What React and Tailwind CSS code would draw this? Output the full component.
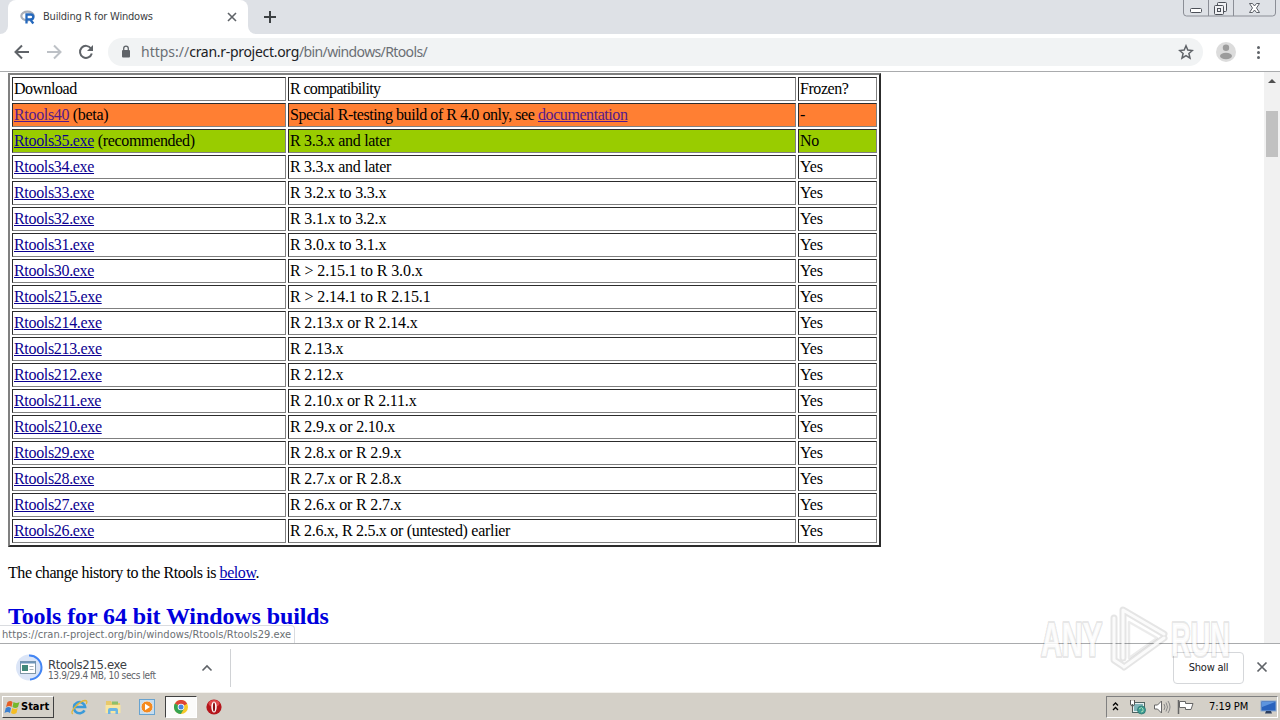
import React from "react";

const rows = [
  { name: "Rtools40", note: " (beta)", compat: "Special R-testing build of R 4.0 only, see ", doc: true, frozen: "-", color: "bg-[#ff7f33]", visited: true, spacing: "tracking-[-0.43px]" },
  { name: "Rtools35.exe", note: " (recommended)", compat: "R 3.3.x and later", frozen: "No", color: "bg-[#99cc00]", spacing: "tracking-[-0.3px]" },
  { name: "Rtools34.exe", compat: "R 3.3.x and later", frozen: "Yes", spacing: "tracking-[-0.3px]" },
  { name: "Rtools33.exe", compat: "R 3.2.x to 3.3.x", frozen: "Yes", spacing: "tracking-[-0.18px]" },
  { name: "Rtools32.exe", compat: "R 3.1.x to 3.2.x", frozen: "Yes", spacing: "tracking-[-0.18px]" },
  { name: "Rtools31.exe", compat: "R 3.0.x to 3.1.x", frozen: "Yes", spacing: "tracking-[-0.18px]" },
  { name: "Rtools30.exe", compat: "R > 2.15.1 to R 3.0.x", frozen: "Yes", spacing: "tracking-[-0.1px]" },
  { name: "Rtools215.exe", compat: "R > 2.14.1 to R 2.15.1", frozen: "Yes", spacing: "tracking-[-0.1px]" },
  { name: "Rtools214.exe", compat: "R 2.13.x or R 2.14.x", frozen: "Yes", spacing: "tracking-[-0.15px]" },
  { name: "Rtools213.exe", compat: "R 2.13.x", frozen: "Yes", spacing: "tracking-[-0.15px]" },
  { name: "Rtools212.exe", compat: "R 2.12.x", frozen: "Yes", spacing: "tracking-[-0.15px]" },
  { name: "Rtools211.exe", compat: "R 2.10.x or R 2.11.x", frozen: "Yes", spacing: "tracking-[-0.18px]" },
  { name: "Rtools210.exe", compat: "R 2.9.x or 2.10.x", frozen: "Yes", spacing: "tracking-[-0.17px]" },
  { name: "Rtools29.exe", compat: "R 2.8.x or R 2.9.x", frozen: "Yes", spacing: "tracking-[-0.18px]" },
  { name: "Rtools28.exe", compat: "R 2.7.x or R 2.8.x", frozen: "Yes", spacing: "tracking-[-0.18px]" },
  { name: "Rtools27.exe", compat: "R 2.6.x or R 2.7.x", frozen: "Yes", spacing: "tracking-[-0.18px]" },
  { name: "Rtools26.exe", compat: "R 2.6.x, R 2.5.x or (untested) earlier", frozen: "Yes", spacing: "tracking-[-0.3px]" },
];

const TabStrip = () => (
  <div className="flex h-[34px] shrink-0 bg-[#dee1e6]">
    <div className="h-full w-2 bg-white">
      <div className="h-full w-2 rounded-br-lg bg-[#dee1e6]" />
    </div>
    <div className="flex h-full w-60 items-center rounded-t-lg bg-white pl-3 pr-2.5">
      <svg width="16" height="16" viewBox="0 0 16 16" className="shrink-0">
        <ellipse cx="7.5" cy="7" rx="6.2" ry="4.3" fill="none" stroke="#a9afb9" strokeWidth="2.2" />
        <path d="M6.5 14.500V5.500h4.200q2.600 0 2.600 2.400t-2.600 2.400H7.500M10.300 10.500l3 4" fill="none" stroke="#2468bd" strokeWidth="2.300" />
      </svg>
      <span className="ml-[7px] flex-1 whitespace-nowrap font-['DejaVu_Sans_Condensed',sans-serif] text-[11px] tracking-[-0.2px] text-[#3c4043]">Building R for Windows</span>
      <svg width="12" height="12" viewBox="0 0 12 12">
        <path d="M2 2l8 8M10 2l-8 8" stroke="#5f6368" strokeWidth="1.6" />
      </svg>
    </div>
    <div className="h-full w-2 bg-white">
      <div className="h-full w-2 rounded-bl-lg bg-[#dee1e6]" />
    </div>
    <svg width="28" height="34" viewBox="0 0 28 34">
      <path d="M14 11v12M8 17h12" stroke="#3c4043" strokeWidth="2" />
    </svg>
    <svg width="100" height="18" viewBox="0 0 100 18" className="ml-auto" fill="none">
      <path d="M3.500 0v13q0 3 3 3h86q3 0 3-3V0M28.500 0v16M53.500 0v16" stroke="#8b8e96" />
      <rect x="10.500" y="8.500" width="11" height="4" rx="1" fill="#fff" stroke="#4c5058" />
      <rect x="37.500" y="2.500" width="9" height="9" rx="1" fill="#f0f1f4" stroke="#4c5058" />
      <rect x="34.500" y="5.500" width="9" height="9" rx="1" fill="#f0f1f4" stroke="#4c5058" />
      <rect x="37.500" y="8.500" width="3" height="3" stroke="#4c5058" />
      <path d="M69.500 3.500h3l2 2.500 2-2.500h3l-3 4.500 3 4.500h-3l-2-2.500-2 2.500h-3l3-4.500z" fill="#fff" stroke="#4c5058" strokeWidth=".9" />
    </svg>
  </div>
);

const Toolbar = () => (
  <div className="flex h-[38px] shrink-0 items-center border-b border-[#a9abad] bg-white pb-px">
    <svg width="108" height="36" viewBox="0 0 108 36" fill="none" strokeWidth="2">
      <path d="M29 18H16M22 11.500L15.500 18l6.500 6.500" stroke="#5f6368" />
      <path d="M47 18h13M54 11.500l6.500 6.500-6.500 6.500" stroke="#bdc1c6" />
      <path d="M91 14.500a6 6 0 1 0 .8 5" stroke="#5f6368" />
      <path d="M93 11v6h-6z" fill="#5f6368" />
    </svg>
    <div className="flex h-7 w-[1095px] items-center rounded-full bg-[#f1f3f4] pl-3 pr-[9px]">
      <svg width="12" height="14" viewBox="0 0 12 14">
        <rect x="2" y="5" width="8" height="7.500" rx="1" fill="#5f6368" />
        <path d="M3.700 5V3.500a2.300 2.300 0 0 1 4.600 0V5" fill="none" stroke="#5f6368" strokeWidth="1.300" />
      </svg>
      <span className="ml-[9px] flex-1 whitespace-nowrap pb-px font-['Noto_Sans',sans-serif] text-[14px] tracking-[-0.62px] text-[#6b6f74]">
        <span className="tracking-normal">https://</span>
        <span className="tracking-[-0.3px] text-[#202124]">cran.r-project.org</span>/bin/windows/Rtools/
      </span>
      <svg width="16" height="16" viewBox="0 0 16 16">
        <path d="M8 1.800l1.800 4.300 4.600.4-3.500 3 1.100 4.600-4-2.500-4 2.500 1.100-4.600-3.500-3 4.600-.4z" fill="none" stroke="#5f6368" strokeWidth="1.500" />
      </svg>
    </div>
    <svg width="77" height="36" viewBox="0 0 77 36" fill="#5f6368">
      <circle cx="23" cy="18" r="10" fill="#dcdcdc" />
      <circle cx="23" cy="13.800" r="3.200" fill="#9c9c9c" />
      <ellipse cx="23" cy="22" rx="6" ry="3.200" fill="#9c9c9c" />
      <circle cx="55.500" cy="13.500" r="1.500" />
      <circle cx="55.500" cy="18.500" r="1.500" />
      <circle cx="55.500" cy="23.500" r="1.500" />
    </svg>
  </div>
);

const cell = "h-6 border border-r-[#808080] border-b-[#808080] border-t-[#2c2c2c] border-l-[#2c2c2c] pl-px leading-[22px] whitespace-nowrap";

const RtoolsTable = () => (
  <div className="grid w-[873px] grid-cols-[274px_508px_79px] gap-0.5 border-2 border-t-[#808080] border-l-[#808080] border-r-[#2c2c2c] border-b-[#2c2c2c] p-0.5">
    <div className={`${cell} tracking-[-0.5px]`}>Download</div>
    <div className={`${cell} tracking-[-0.64px]`}>R compatibility</div>
    <div className={`${cell} tracking-[-0.43px]`}>Frozen?</div>
    {rows.map((row) => (
      <React.Fragment key={row.name}>
        <div className={`${cell} tracking-[-0.33px] ${row.color || ""}`}>
          <a className={`underline ${row.visited ? "text-[#551a8b]" : "text-[#0b0090]"}`}>{row.name}</a>
          {row.note}
        </div>
        <div className={`${cell} ${row.spacing} ${row.color || ""}`}>
          {row.compat}
          {row.doc && <a className="text-[#551a8b] underline">documentation</a>}
        </div>
        <div className={`${cell} tracking-[-0.2px] ${row.color || ""}`}>{row.frozen}</div>
      </React.Fragment>
    ))}
  </div>
);

const Page = () => (
  <div className="relative flex h-[571px] shrink-0 overflow-hidden">
    <div className="flex-1 pl-2 pt-px font-['Liberation_Serif',serif] text-[16px] text-black">
      <RtoolsTable />
      <p className="mt-4 leading-5 tracking-[-0.43px]">
        The change history to the Rtools is <a className="text-[#0000b0] underline">below</a>.
      </p>
      <h2 className="mt-[19px] text-[24px] font-bold leading-7 tracking-[-0.1px] text-[#0000dd]">Tools for 64 bit Windows builds</h2>
    </div>
    <div className="flex w-4 flex-col items-center bg-[#f1f1f1]">
      <svg width="16" height="39" viewBox="0 0 16 39">
        <path d="M4 11l4-4 4 4z" fill="#505050" />
      </svg>
      <div className="h-[46px] w-3 bg-[#c1c1c1]" />
    </div>
    <div className="absolute bottom-0 left-0 h-[18px] w-[295px] rounded-tr border-t border-r border-[#dadce0] bg-white pl-0.5 font-['DejaVu_Sans_Condensed',sans-serif] text-[11px] leading-[17px] tracking-[0.035px] whitespace-nowrap text-[#6b6f74]">
      https://cran.r-project.org/bin/windows/Rtools/Rtools29.exe
    </div>
  </div>
);

const DownloadBar = () => (
  <div className="flex h-[49px] shrink-0 items-center border-t border-[#a9abad] bg-white font-['DejaVu_Sans_Condensed',sans-serif]">
    <svg width="48" height="48" viewBox="0 0 48 48">
      <circle cx="29" cy="23.500" r="13" fill="#dbe5f7" />
      <path d="M29 11.500a12 12 0 0 1 1 24" fill="none" stroke="#4285f4" strokeWidth="2" />
      <rect x="20.500" y="17.500" width="15" height="12" fill="#fff" stroke="#7f96a6" />
      <path d="M20 18.500h16" stroke="#6d94b8" strokeWidth="2" />
      <rect x="22" y="21" width="6" height="6" fill="#408879" />
      <path d="M29.500 22.500h4M29.500 25.500h4" stroke="#a7b0b8" />
    </svg>
    <div className="w-[152px] whitespace-nowrap pt-0.5">
      <div className="text-[13px] leading-[13px] tracking-[-0.35px] text-[#3c4043]">Rtools215.exe</div>
      <div className="text-[10px] leading-[10px] tracking-[-0.37px] text-[#5f6368]">13.9/29.4 MB, 10 secs left</div>
    </div>
    <svg width="14" height="14" viewBox="0 0 14 14">
      <path d="M2.500 9.500L7 5l4.500 4.500" fill="none" stroke="#5f6368" strokeWidth="1.600" />
    </svg>
    <div className="ml-4 h-[38px] w-px bg-[#d0d2d5]" />
    <div className="ml-auto flex h-8 w-[71px] items-center justify-center rounded border border-[#d5d7da] text-[11px] tracking-[-0.25px] text-[#202124]">Show all</div>
    <svg width="36" height="32" viewBox="0 0 36 32">
      <path d="M13.500 10.500l9 9M22.500 10.500l-9 9" stroke="#5f6368" strokeWidth="1.700" />
    </svg>
  </div>
);

const StartIcon = () => (
  <svg width="17" height="16" viewBox="0 0 16 16">
    <path d="M3 3q3-2 5 0L7 8Q5 6 1.500 8z" fill="#e65e24" />
    <path d="M9 3q3 2 6 0l-1.500 5Q11 10 8 8z" fill="#75b82c" />
    <path d="M1.300 9Q4 7 6.500 9l-1 5Q3 12 0 14z" fill="#3b80d0" />
    <path d="M7.700 9q3 2 5.500 0L12 14q-3 2-5.500 0z" fill="#f5bd23" />
  </svg>
);

const ExplorerIcon = () => (
  <svg width="18" height="18" viewBox="0 0 18 18" fill="none">
    <path d="M14.500 12.300a5.600 5.600 0 1 1 .6-3.300H5" stroke="#3a9ad9" strokeWidth="2.600" />
    <path d="M3 16q-3-1 2-7 5.500-6 10-6.500 3 0 1.300 3.500" stroke="#e3b738" strokeWidth="1.300" />
  </svg>
);

const FolderIcon = () => (
  <svg width="18" height="18" viewBox="0 0 18 18">
    <path d="M2 3h5l1 2h8v10H2z" fill="#e8c96a" />
    <path d="M8 3.500h6v3H8z" fill="#8cc06a" />
    <path d="M1.500 7h15v8h-15z" fill="#f8e6a0" />
    <path d="M4 16v-4q0-2 2-2h6q2 0 2 2v4h-2.500v-3h-5v3z" fill="#6bb5e3" />
  </svg>
);

const MediaIcon = () => (
  <svg width="18" height="18" viewBox="0 0 18 18">
    <rect x="1.500" y="1.500" width="15" height="15" fill="#c5ddf0" stroke="#68a3d0" />
    <circle cx="9" cy="9" r="6" fill="#f58a1f" stroke="#e5e5e5" />
    <path d="M7 5.800L12 9l-5 3.200z" fill="#fff" />
  </svg>
);

const ChromeIcon = () => (
  <svg width="14" height="14" viewBox="0 0 14 14">
    <circle cx="7" cy="7" r="7" fill="#f7c928" />
    <path d="M7 7L.9 3.500A7 7 0 0 1 13.100 3.500z" fill="#de4537" />
    <path d="M7 7L.9 3.500A7 7 0 0 0 6.800 14L10 8.700z" fill="#36a350" />
    <path d="M7 3.500h6.100L7 7z" fill="#de4537" />
    <circle cx="7" cy="7" r="3.300" fill="#fff" />
    <circle cx="7" cy="7" r="2.500" fill="#4a86e0" />
  </svg>
);

const OperaIcon = () => (
  <svg width="16" height="16" viewBox="0 0 16 16">
    <circle cx="8" cy="8" r="7.600" fill="#b5161c" />
    <ellipse cx="8" cy="4.500" rx="5.500" ry="3.500" fill="#e0474a" />
    <ellipse cx="8" cy="8" rx="2.700" ry="5.600" fill="#fff" />
    <ellipse cx="8" cy="8" rx="1.100" ry="4.600" fill="#8d1014" />
  </svg>
);

const Tray = () => (
  <div className="mr-0.5 ml-auto flex h-[22px] w-[172px] items-center border border-t-[#808080] border-l-[#808080] border-r-white border-b-white">
    <svg width="100" height="20" viewBox="0 0 100 20" fill="none">
      <path d="M6 8.500l2.500-2.500L11 8.500M6 13l2.500-2.500L11 13" stroke="#000" strokeWidth="1.300" />
      <rect x="25.500" y="5.500" width="12" height="10" fill="#e5eeee" stroke="#4f6462" />
      <rect x="27" y="7" width="9" height="7" fill="#7fb4b8" />
      <circle cx="34.500" cy="13" r="4" fill="#3c9c93" stroke="#2f756e" strokeWidth=".8" />
      <path d="M32 12q3-3 4 0t-2 3" stroke="#a7ddb4" />
      <path d="M23.500 3v4q0 2 2 2t2-2V3M25.500 9v5" stroke="#555" />
      <path d="M24 4h3v3h-3z" fill="#fff" />
      <path d="M47.500 8h3l4-4v12l-4-4h-3z" fill="#fff" stroke="#666" />
      <path d="M57 7q2 3 0 6M59 5.500q3 4.500 0 9M61 4q4 6 0 12" stroke="#888" />
      <path d="M71.500 3v14" stroke="#666" strokeWidth="1.500" />
      <path d="M72.500 4.500h6v2h7.500l-2 6h-5.500v-2h-6z" fill="#fff" stroke="#666" />
    </svg>
    <span className="ml-0.5 w-[48px] whitespace-nowrap text-[11px] leading-5 tracking-[-0.1px] text-black">7:19 PM</span>
    <svg width="18" height="18" viewBox="0 0 18 18" className="ml-auto">
      <rect x="2" y="3" width="15" height="10" fill="#2962bd" stroke="#8aa8cf" />
      <path d="M3 4h13L3 9z" fill="#5d94de" />
      <path d="M7 13h5l1 2.500H6z" fill="#2c3f60" />
    </svg>
  </div>
);

const Taskbar = () => (
  <div className="flex h-7 shrink-0 items-center border-t border-[#f4f2ee] bg-[#d4d0c8] pl-0.5 font-['DejaVu_Sans_Condensed',sans-serif]">
    <div className="flex h-[22px] w-[52px] items-center border border-t-white border-l-white border-r-[#404040] border-b-[#404040] pl-px text-[11px] font-bold leading-5 text-black">
      <StartIcon />
      <span className="pt-px">Start</span>
    </div>
    <div className="flex items-center gap-4 pl-4">
      <ExplorerIcon />
      <FolderIcon />
      <MediaIcon />
    </div>
    <div className="ml-[9px] flex h-[22px] w-8 items-center justify-center border border-t-[#404040] border-l-[#404040] border-r-white border-b-white bg-[#fbfbfa]">
      <ChromeIcon />
    </div>
    <div className="ml-[9px]">
      <OperaIcon />
    </div>
    <Tray />
  </div>
);

// translucent brand mark over the lower right corner
const Watermark = () => (
  <svg width="200" height="72" viewBox="0 0 200 72" className="pointer-events-none absolute right-[44px] bottom-[44px] overflow-visible" fill="none">
    <g stroke="#000" strokeOpacity=".1" strokeWidth="4.5" strokeLinejoin="round" fill="#fff" fillOpacity=".85" fontFamily="Liberation Sans Narrow, Liberation Sans, sans-serif" fontSize="49" fontWeight="bold" paintOrder="stroke">
      <text x="5" y="52" textLength="61" lengthAdjust="spacingAndGlyphs">ANY</text>
      <text x="135" y="52" textLength="59" lengthAdjust="spacingAndGlyphs">RUN</text>
    </g>
    <g strokeLinejoin="round" strokeLinecap="round">
      <path d="M78 14v42l9 6M87 54V6l41 24M128 34L88 63" stroke="#000" strokeOpacity=".1" strokeWidth="7" />
      <path d="M93 18v36l28-20z" stroke="#000" strokeOpacity=".08" strokeWidth="2.500" />
      <path d="M78 14v42l9 6M87 54V6l41 24M128 34L88 63" stroke="#fff" strokeOpacity=".85" strokeWidth="3" />
    </g>
  </svg>
);

const App = () => (
  <div className="relative flex h-screen flex-col overflow-hidden bg-white">
    <TabStrip />
    <Toolbar />
    <Page />
    <DownloadBar />
    <Taskbar />
    <Watermark />
  </div>
);

export default App;
